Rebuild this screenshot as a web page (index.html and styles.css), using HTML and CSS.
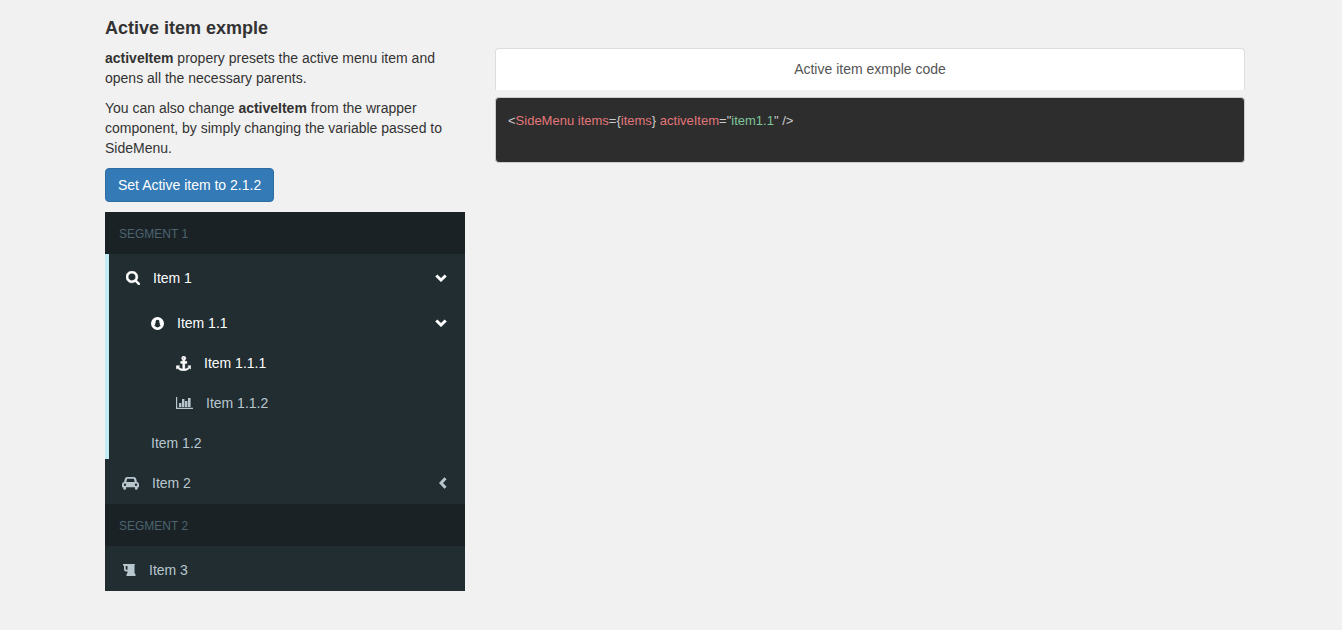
FILE: index.html
```html
<!DOCTYPE html>
<html lang="en">
<head>
<meta charset="utf-8">
<title>Active item exmple</title>
<link rel="stylesheet" href="styles.css">
</head>
<body>
<main class="container">
  <section class="demo">
    <h4 class="title">Active item exmple</h4>
    <p><b>activeItem</b> propery presets the active menu item and opens all the necessary parents.</p>
    <p>You can also change <b>activeItem</b> from the wrapper component, by simply changing the variable passed to SideMenu.</p>
    <button class="btn" type="button">Set Active item to 2.1.2</button>
    <nav class="side-menu">
      <div class="segment">SEGMENT 1</div>
      <div class="branch active">
        <a class="item" href="#">
          <svg class="icon bold" width="14" height="14" viewBox="64 128 1664 1664"><path d="M1216 832q0-185-131.500-316.500t-316.500-131.500-316.500 131.500-131.500 316.500 131.500 316.500 316.500 131.500 316.500-131.500 131.500-316.500zm512 832q0 52-38 90t-90 38q-54 0-90-38l-343-342q-179 124-399 124-143 0-273.500-55.500t-225-150-150-225-55.500-273.500 55.500-273.500 150-225 225-150 273.500-55.500 273.500 55.500 225 150 150 225 55.500 273.500q0 220-124 399l343 343q37 37 37 90z"/></svg>
          <span>Item 1</span>
          <svg class="chevron" width="12" height="8" viewBox="0 0 12 8"><path d="M1.300 1.500 6 6 10.700 1.500"/></svg>
        </a>
        <div class="children">
          <a class="item sub" href="#">
            <svg class="icon" width="13" height="13" viewBox="0 0 13 13"><path fill-rule="evenodd" d="M6.500 0a6.500 6.500 0 1 1 0 13a6.500 6.500 0 0 1 0-13zM6.500 2.800C5.200 2.800 4.600 3.700 4.600 4.800V6.200L3.600 6.700 4.400 7.400 3.200 9 4.600 9.500 5.300 10 6.500 10.400 7.700 10 8.400 9.500 9.800 9 8.600 7.400 9.400 6.700 8.400 6.200V4.800C8.400 3.700 7.800 2.800 6.500 2.800z"/></svg>
            <span>Item 1.1</span>
            <svg class="chevron" width="12" height="8" viewBox="0 0 12 8"><path d="M1.300 1.500 6 6 10.700 1.500"/></svg>
          </a>
          <a class="item sub deep" href="#">
            <svg class="icon bold" width="15" height="15" viewBox="0 0 1792 1792"><path d="M960 256q0-26-19-45t-45-19-45 19-19 45 19 45 45 19 45-19 19-45zm800 928v352q0 22-20 30-8 2-12 2-12 0-23-9l-93-93q-119 143-318.500 226.500t-397.500 83.500-397.500-83.500-318.500-226.500l-93 93q-9 9-23 9-4 0-12-2-20-8-20-30v-352q0-14 9-23t23-9h352q22 0 30 20 8 19-7 35l-100 100q67 91 189.500 153.500t271.500 82.500v-647h-192q-26 0-45-19t-19-45v-128q0-26 19-45t45-19h192v-163q-58-34-93-92.500t-35-128.500q0-106 75-181t181-75 181 75 75 181q0 70-35 128.500t-93 92.500v163h192q26 0 45 19t19 45v128q0 26-19 45t-45 19h-192v647q149-20 271.500-82.500t189.500-153.500l-100-100q-15-16-7-35 8-20 30-20h352q14 0 23 9t9 23z"/></svg>
            <span>Item 1.1.1</span>
          </a>
          <a class="item sub deep muted" href="#">
            <svg class="icon" width="17" height="12" viewBox="0 0 17 12"><path d="M0 0h1.200v10.800H17V12H0zM3 6h2.400v4H3zM6 2h2.400v8H6zM9 4h2.400v6H9zM12 1h2.600v9H12z"/></svg>
            <span>Item 1.1.2</span>
          </a>
          <a class="item sub muted" href="#"><span>Item 1.2</span></a>
        </div>
      </div>
      <div class="branch">
        <a class="item muted" href="#">
          <svg class="icon" width="17" height="13" viewBox="0 0 17 13"><path fill-rule="evenodd" d="M5 0h7q1.500 0 2 1.500l1 3.500q2 .3 2 2.300v3h-1.300v1.200q0 1.300-1.400 1.300t-1.400-1.300v-1.200H4.100v1.200q0 1.300-1.400 1.300t-1.400-1.300v-1.200H0v-3q0-2 2-2.300l1-3.500q.5-1.500 2-1.500zm.1 1.700L4.300 5h8.400l-.8-3.300zM3 6.500a1.200 1.200 0 1 0 0 2.400a1.200 1.200 0 0 0 0-2.400zm11 0a1.200 1.200 0 1 0 0 2.400a1.200 1.200 0 0 0 0-2.400z"/></svg>
          <span>Item 2</span>
          <svg class="chevron" width="8" height="12" viewBox="0 0 8 12"><path d="M6.500 1.300 2 6 6.500 10.700"/></svg>
        </a>
      </div>
      <div class="segment">SEGMENT 2</div>
      <div class="branch">
        <a class="item muted" href="#">
          <svg class="icon" width="14" height="12" viewBox="0 0 14 12"><path fill-rule="evenodd" d="M1 0h12l-.5 1.500V9l1 1.200V12H4.500v-1.800l1-1.200V7.500H4Q2 7.500 2 5.500V2L1 1.200zm2.700 2v3q0 .8.800.8h1V2z"/></svg>
          <span>Item 3</span>
        </a>
      </div>
    </nav>
  </section>
  <section class="source">
    <button class="source-head" type="button">Active item exmple code</button>
    <pre class="code"><code>&lt;<span class="name">SideMenu</span> <span class="name">items</span>={<span class="name">items</span>} <span class="name">activeItem</span>="<span class="string">item1.1</span>" /&gt;</code></pre>
  </section>
</main>
</body>
</html>
```

FILE: styles.css
```css
* { box-sizing: border-box; }

body {
  margin: 0;
  background: #f1f1f1;
  color: #333;
  font: 14px/20px "Liberation Sans", Arial, sans-serif;
}

.container {
  display: grid;
  grid-template-columns: minmax(0, 360fr) minmax(0, 750fr);
  gap: 30px;
  max-width: 1148px;
  margin: 0 auto;
  padding: 18px 0 39px 8px;
}

.title { margin: 0 0 10px; font-size: 18px; line-height: 20px; }
p { margin: 0 0 10px; }

.btn {
  display: block;
  margin-bottom: 10px;
  padding: 6px 12px;
  border: 1px solid #2e6da4;
  border-radius: 4px;
  background: #337ab7;
  color: #fff;
  font: inherit;
}

.side-menu { background: #222d32; }

.segment {
  padding: 12px 14px 10px;
  background: #1a2226;
  color: #4b646f;
  font-size: 12px;
}

.branch.active { border-left: 4px solid #c2ebf3; }

.item {
  display: flex;
  align-items: center;
  gap: 13px;
  padding: 14px 18px 11px 17px;
  color: #fff;
  text-decoration: none;
}
.item.muted { color: #b8c7ce; }
.item.sub { margin-top: 5px; padding: 9px 18px 6px 42px; }
.item.deep { padding-left: 67px; }

.icon { flex: none; fill: currentColor; }
.icon.bold { stroke: currentColor; stroke-width: 50; }
.chevron {
  flex: none;
  margin-left: auto;
  fill: none;
  stroke: currentColor;
  stroke-width: 3;
}

.source { padding-top: 30px; }

.source-head {
  display: block;
  width: 100%;
  padding: 10px 15px 11px;
  border: 1px solid #ddd;
  border-bottom: 0;
  border-radius: 4px 4px 0 0;
  background: #fff;
  color: #555;
  font: inherit;
}

.code {
  margin: 7px 0 0;
  padding: 13px 12px 31px;
  border: 1px solid #ccc;
  border-radius: 4px;
  background: #2d2d2d;
  color: #ccc;
  font: 13px/20px "Liberation Sans", Arial, sans-serif;
  overflow: auto;
}
.code code { font: inherit; }
.name { color: #e2777a; }
.string { color: #7ec699; }
```
